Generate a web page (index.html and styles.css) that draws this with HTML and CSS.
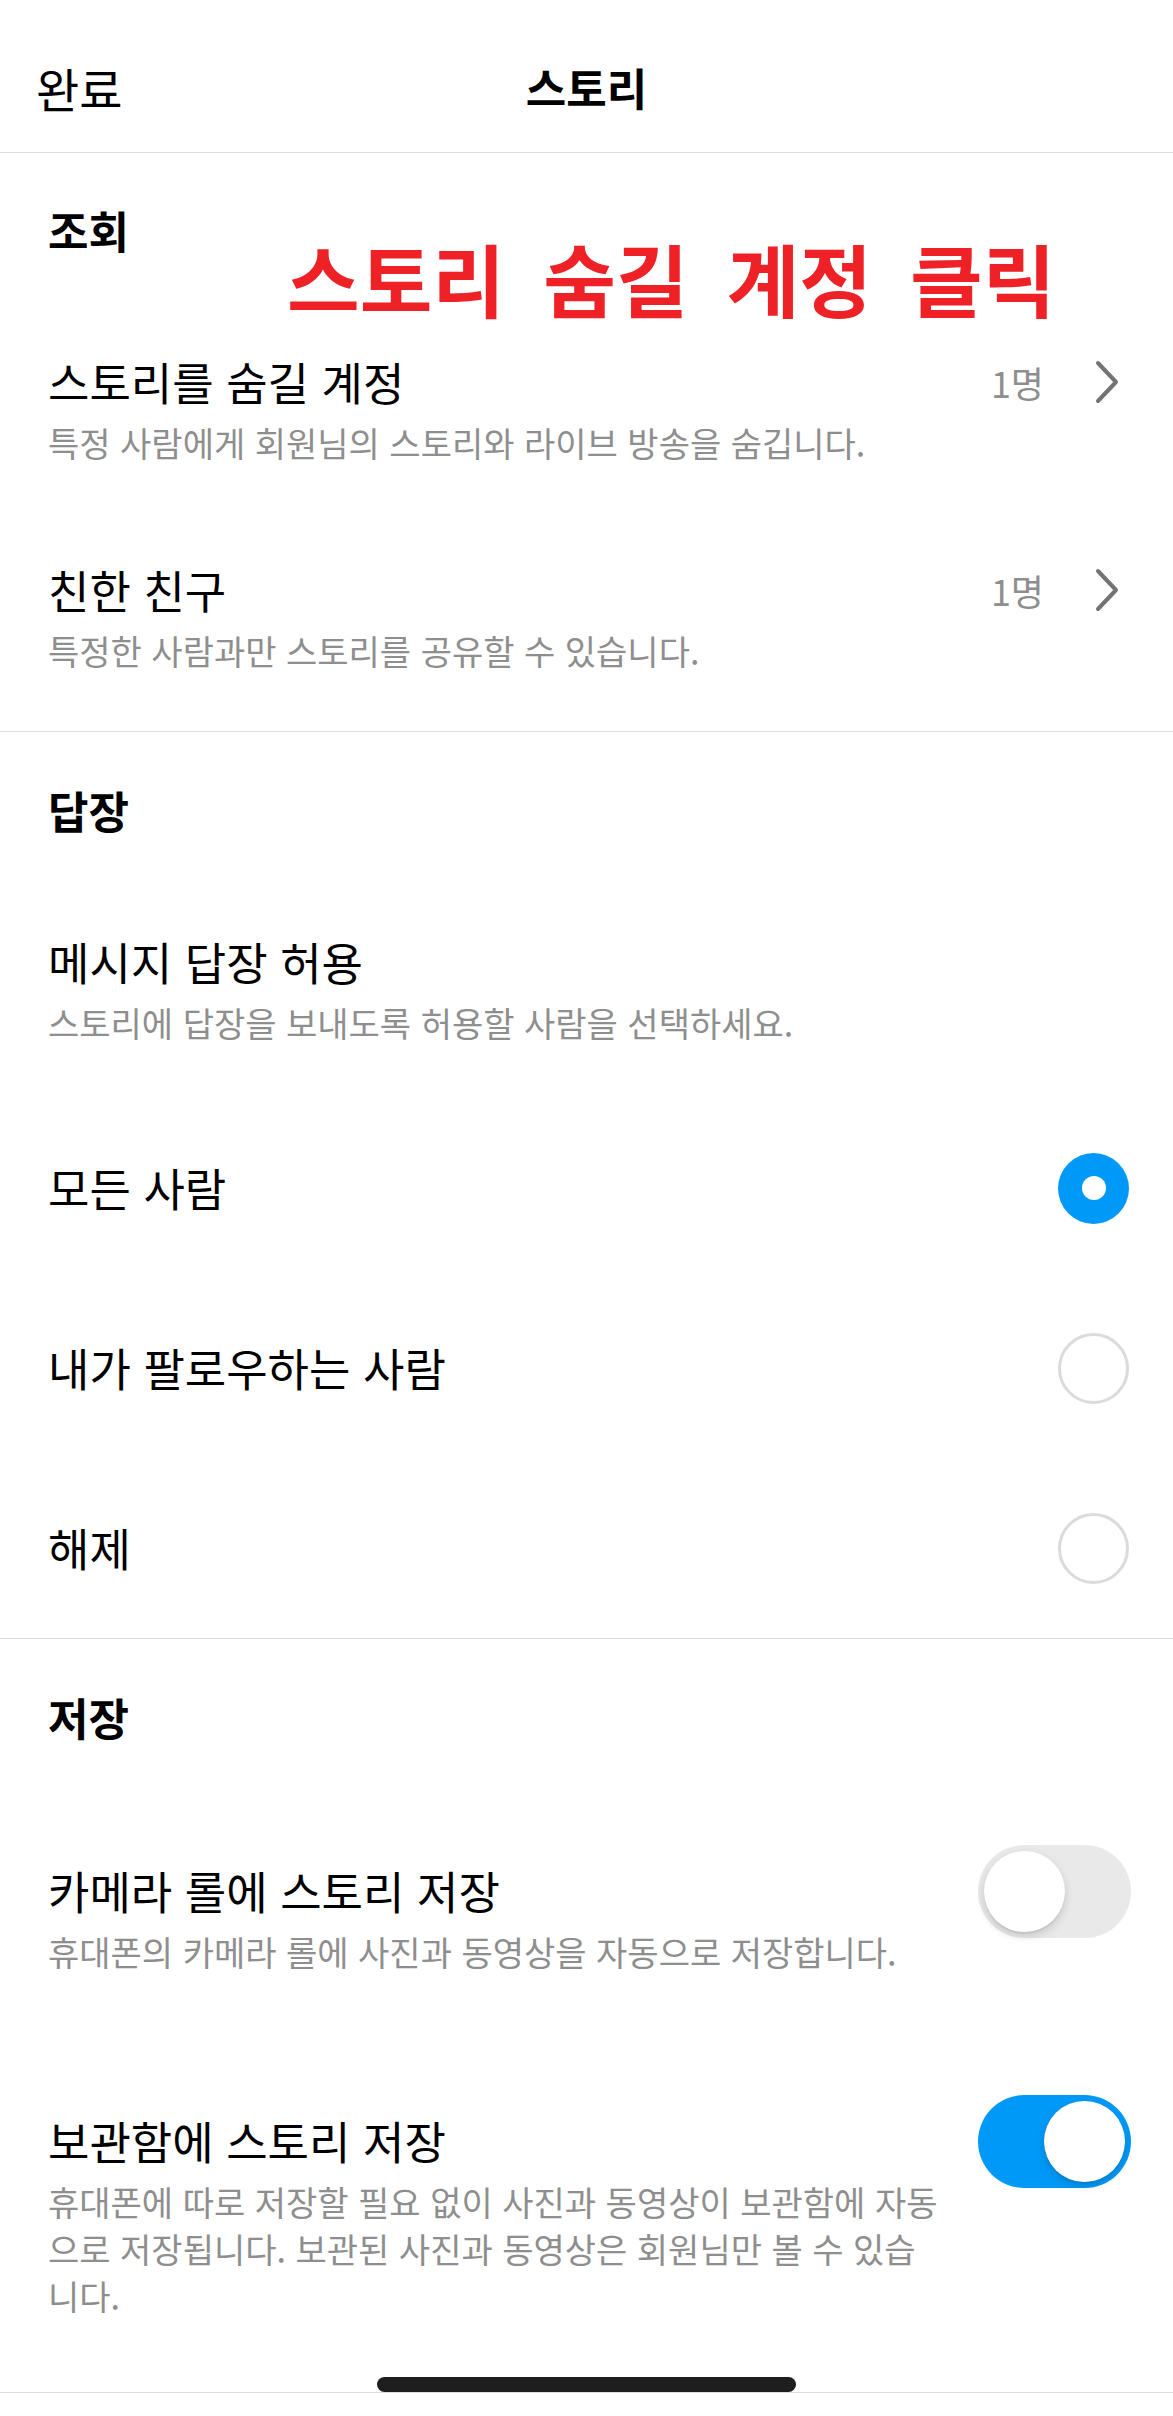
FILE: index.html
```html
<!DOCTYPE html>
<html lang="ko">
<head>
    <meta charset="utf-8">
    <title>스토리</title>
    <link rel="stylesheet" href="styles.css">
</head>
<body>
    <div class="screen">
        <header class="nav">
            <a class="nav-done" href="#">완료</a>
            <h1 class="nav-title">스토리</h1>
            <span></span>
        </header>

        <section class="group group--view">
            <h2 class="group-title">조회</h2>
            <p class="note">스토리 숨길 계정 클릭</p>

            <div class="row">
                <div class="row-text">
                    <div class="row-label">스토리를 숨길 계정</div>
                    <div class="row-desc">특정 사람에게 회원님의 스토리와 라이브 방송을 숨깁니다.</div>
                </div>
                <div class="row-end">
                    <span class="count">1명</span>
                    <svg class="chevron" viewBox="0 0 26 46"><path d="M4 4 L22 23 L4 42"/></svg>
                </div>
            </div>

            <div class="row">
                <div class="row-text">
                    <div class="row-label">친한 친구</div>
                    <div class="row-desc">특정한 사람과만 스토리를 공유할 수 있습니다.</div>
                </div>
                <div class="row-end">
                    <span class="count">1명</span>
                    <svg class="chevron" viewBox="0 0 26 46"><path d="M4 4 L22 23 L4 42"/></svg>
                </div>
            </div>
        </section>

        <section class="group">
            <h2 class="group-title">답장</h2>

            <div class="row row--intro">
                <div class="row-text">
                    <div class="row-label">메시지 답장 허용</div>
                    <div class="row-desc">스토리에 답장을 보내도록 허용할 사람을 선택하세요.</div>
                </div>
            </div>

            <div class="row row--choice">
                <div class="row-text">
                    <div class="row-label">모든 사람</div>
                </div>
                <div class="row-end"><span class="radio is-on"></span></div>
            </div>

            <div class="row row--choice">
                <div class="row-text">
                    <div class="row-label">내가 팔로우하는 사람</div>
                </div>
                <div class="row-end"><span class="radio"></span></div>
            </div>

            <div class="row row--choice">
                <div class="row-text">
                    <div class="row-label">해제</div>
                </div>
                <div class="row-end"><span class="radio"></span></div>
            </div>
        </section>

        <section class="group group--last">
            <h2 class="group-title">저장</h2>

            <div class="row row--switch">
                <div class="row-text">
                    <div class="row-label">카메라 롤에 스토리 저장</div>
                    <div class="row-desc">휴대폰의 카메라 롤에 사진과 동영상을 자동으로 저장합니다.</div>
                </div>
                <div class="row-end"><span class="switch"></span></div>
            </div>

            <div class="row row--switch">
                <div class="row-text">
                    <div class="row-label">보관함에 스토리 저장</div>
                    <div class="row-desc row-desc--lines">휴대폰에 따로 저장할 필요 없이 사진과 동영상이 보관함에 자동<br>으로 저장됩니다. 보관된 사진과 동영상은 회원님만 볼 수 있습<br>니다.</div>
                </div>
                <div class="row-end"><span class="switch is-on"></span></div>
            </div>
        </section>

        <footer class="home">
            <span class="home-bar"></span>
        </footer>
    </div>
</body>
</html>
```

FILE: styles.css
```css
body {
    margin: 0;
    font-family: "Noto Sans CJK KR", "Noto Sans", sans-serif;
    color: #000;
    background-color: #fff;
}

.screen {
    min-height: 2416px;
    display: flex;
    flex-direction: column;
}

/* top bar */
.nav {
    display: grid;
    grid-template-columns: 1fr auto 1fr;
    align-items: center;
    height: 130px;
    padding: 22px 36px 0;
    border-bottom: 1px solid #dbdbdb;
}

.nav-done {
    justify-self: start;
    font-size: 47px;
    color: #000;
    text-decoration: none;
}

.nav-title {
    margin: 0;
    font-size: 44px;
    font-weight: 700;
}

/* sections */
.group {
    position: relative;
    padding-top: 50px;
    border-bottom: 1px solid #dbdbdb;
}

.group--view {
    padding-top: 49px;
    padding-bottom: 9px;
}

.group--last {
    border-bottom: none;
}

.group-title {
    margin: 0 0 48px;
    padding-left: 48px;
    font-size: 44px;
    font-weight: 700;
    line-height: 56px;
}

.note {
    position: absolute;
    left: 287px;
    top: 85px;
    margin: 0;
    font-size: 79px;
    font-weight: 700;
    line-height: 80px;
    word-spacing: 16px;
    white-space: nowrap;
    color: #ee2226;
}

/* rows */
.row {
    display: flex;
    align-items: flex-start;
    gap: 24px;
    padding: 47px 42px 48px 48px;
}

.row--intro {
    padding-bottom: 52px;
}

.row--choice {
    padding-top: 61px;
    padding-bottom: 61px;
}

.row--switch {
    padding-top: 69px;
    padding-bottom: 68px;
}

.row-text {
    flex: 1;
    min-width: 0;
}

.row-label {
    font-size: 45px;
    line-height: 58px;
}

.row-desc {
    margin-top: 8px;
    font-size: 34px;
    line-height: 47px;
    color: #8e8e8e;
}

.row-desc--lines {
    white-space: nowrap;
}

.row-end {
    height: 58px;
    display: flex;
    align-items: center;
    flex-shrink: 0;
}

.count {
    margin-right: 50px;
    font-size: 36px;
    color: #8e8e8e;
}

.chevron {
    width: 26px;
    height: 46px;
    margin-right: 11px;
    fill: none;
    stroke: #737373;
    stroke-width: 4;
    stroke-linecap: round;
    stroke-linejoin: round;
}

/* radio buttons */
.radio {
    width: 71px;
    height: 71px;
    margin-right: 2px;
    box-sizing: border-box;
    border: 3px solid #dbdbdb;
    border-radius: 50%;
}

.radio.is-on {
    display: flex;
    align-items: center;
    justify-content: center;
    border: none;
    background-color: #0099f7;
}

.radio.is-on::after {
    content: "";
    width: 24px;
    height: 24px;
    border-radius: 50%;
    background-color: #fff;
}

/* switches */
.switch {
    position: relative;
    width: 153px;
    height: 93px;
    border-radius: 47px;
    background-color: #e9e9ea;
}

.switch::after {
    content: "";
    position: absolute;
    top: 6px;
    left: 6px;
    width: 81px;
    height: 81px;
    border-radius: 50%;
    background-color: #fff;
    box-shadow: 0 4px 10px rgba(0,0,0,0.15), 0 2px 1px rgba(0,0,0,0.06);
}

.switch.is-on {
    background-color: #0099f7;
}

.switch.is-on::after {
    left: 66px;
}

/* home indicator */
.home {
    position: relative;
    margin-top: auto;
    height: 23px;
    border-top: 1px solid #dbdbdb;
}

.home-bar {
    position: absolute;
    top: -16px;
    left: 50%;
    width: 419px;
    height: 15px;
    margin-left: -210px;
    border-radius: 8px;
    background-color: #1e1e1e;
}
```
